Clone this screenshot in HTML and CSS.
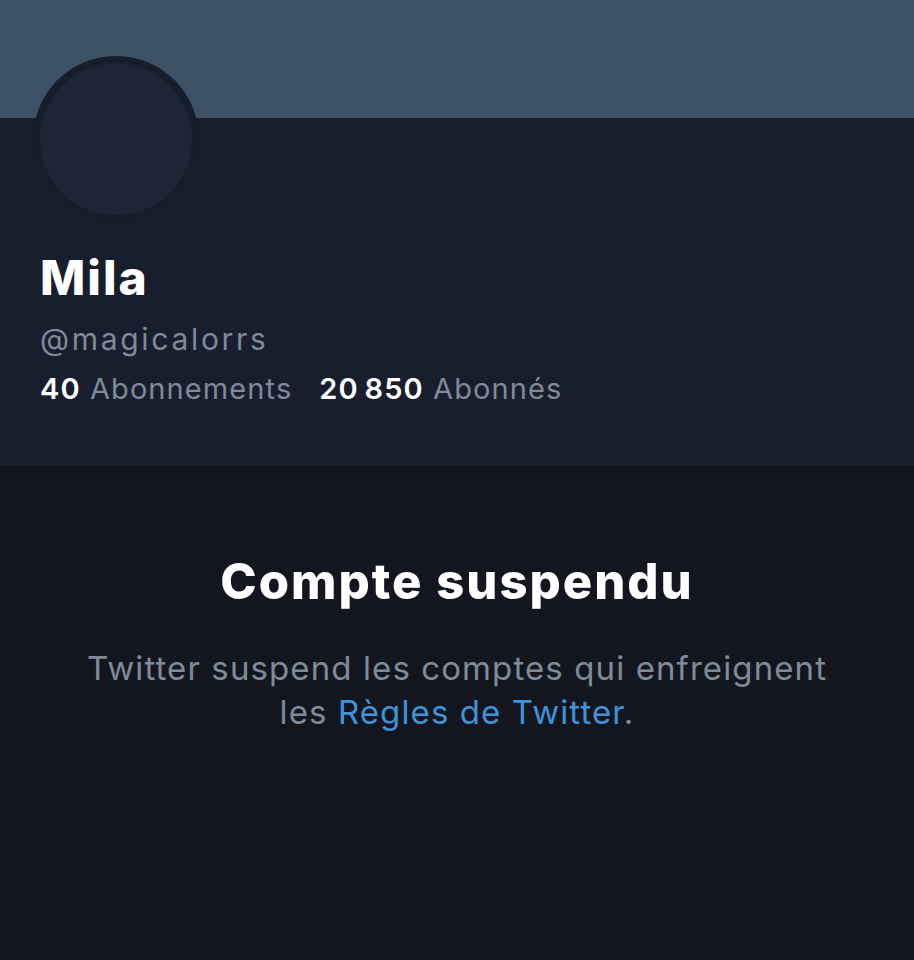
FILE: index.html
```html
<!DOCTYPE html>
<html lang="fr">
<head>
<meta charset="utf-8">
<link rel="stylesheet" href="styles.css">
</head>
<body>
<div class="page">
  <div class="banner"></div>
  <section class="profile">
    <div class="avatar"><div class="avatar-inner"></div></div>
    <h1 class="name">Mila</h1>
    <div class="handle">@magicalorrs</div>
    <div class="stats">
      <span class="stat"><b>40</b> Abonnements</span>
      <span class="stat"><b>20&#8239;850</b> Abonnés</span>
    </div>
  </section>
  <section class="suspended">
    <h2 class="title">Compte suspendu</h2>
    <p class="desc">Twitter suspend les comptes qui enfreignent<br>les <a class="link" href="#">Règles de Twitter</a>.</p>
  </section>
</div>
</body>
</html>
```
FILE: styles.css
```css
* { box-sizing: border-box; }
html, body { margin: 0; padding: 0; background: #14161f; }
body { font-family: Inter, "Noto Sans", sans-serif; width: 914px; height: 960px; overflow: hidden; }
.page { display: flex; flex-direction: column; height: 960px; }
.banner { height: 118px; background: #3d5166; flex: none; }
.profile {
  position: relative;
  background: #181e2e;
  height: 348px;
  flex: none;
  padding: 132px 40px 0;
}
.avatar {
  position: absolute;
  left: 33px;
  top: -62px;
  width: 166px;
  height: 166px;
  border-radius: 50%;
  background: #161d2b;
  display: flex;
  align-items: center;
  justify-content: center;
}
.avatar-inner {
  width: 152px;
  height: 152px;
  border-radius: 50%;
  background: #1d2637;
}
.name {
  margin: 0;
  color: #fff;
  font-size: 48px;
  font-weight: 800;
  line-height: 56px;
  letter-spacing: 2px;
}
.handle {
  margin-top: 13px;
  color: #7f8b99;
  font-size: 30px;
  line-height: 40px;
  letter-spacing: 2.7px;
}
.stats {
  margin-top: 12px;
  display: flex;
  gap: 27px;
  color: #7f8b99;
  font-size: 29px;
  line-height: 36px;
  letter-spacing: 1.1px;
}
.stat b { color: #fff; font-weight: 600; }
.suspended {
  flex: 1;
  background: linear-gradient(#10141d 0, #10141d 10px, #14161f 16px);
  text-align: center;
  padding-top: 88px;
}
.title {
  margin: 0;
  color: #fff;
  font-size: 49px;
  font-weight: 800;
  line-height: 56px;
  letter-spacing: 2px;
}
.desc {
  margin: 36px 0 0;
  color: #7f8b99;
  font-size: 33px;
  line-height: 44px;
  letter-spacing: 1.1px;
}
.link { color: #3d94db; text-decoration: none; }
```
